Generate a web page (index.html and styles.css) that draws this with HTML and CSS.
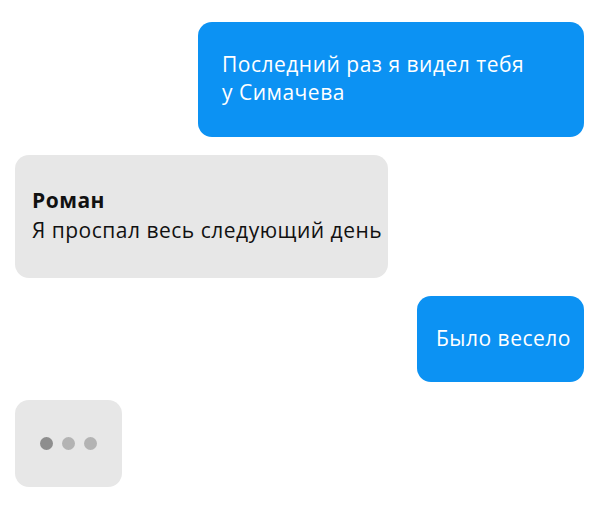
FILE: index.html
```html
<!DOCTYPE html>
<html lang="ru">
<head>
    <meta charset="UTF-8">
    <title>Чат</title>
    <link rel="stylesheet" href="styles.css">
</head>
<body>
    <!-- Chat thread -->
    <main class="chat">
        <div class="bubble bubble-out first">
            Последний раз я видел тебя<br>у Симачева
        </div>

        <div class="bubble bubble-in reply">
            <strong class="author">Роман</strong>
            <span>Я проспал весь следующий день</span>
        </div>

        <div class="bubble bubble-out short">Было весело</div>

        <!-- Typing indicator -->
        <div class="bubble bubble-in typing">
            <span class="dot dot-dark"></span>
            <span class="dot"></span>
            <span class="dot"></span>
        </div>
    </main>
</body>
</html>
```

FILE: styles.css
```css
body {
    margin: 0;
    padding: 0;
    background-color: #fff;
    font-family: 'Open Sans', 'Noto Sans', sans-serif;
    font-size: 21px;
    letter-spacing: 0.5px;
}

.chat {
    display: flex;
    flex-direction: column;
    gap: 18px;
    padding: 22px 20px 0 15px;
}

.bubble {
    box-sizing: border-box;
    border-radius: 14px;
}

.bubble-out {
    align-self: flex-end;
    background-color: #0c92f3;
    color: #fff;
}

.bubble-in {
    align-self: flex-start;
    background-color: #e7e7e7;
    color: #111;
}

.first {
    width: 386px;
    padding: 28px 0 31px 24px;
    line-height: 28px;
}

.reply {
    width: 373px;
    padding: 30px 0 33px 17px;
    line-height: 30px;
    display: flex;
    flex-direction: column;
}

.author {
    font-weight: 700;
}

.short {
    width: 167px;
    padding: 28px 0 30px 19px;
    line-height: 28px;
}

.typing {
    width: 107px;
    height: 87px;
    display: flex;
    align-items: center;
    gap: 9px;
    padding: 0 25px;
}

.dot {
    width: 13px;
    height: 13px;
    border-radius: 50%;
    background-color: #b3b3b3;
}

.dot-dark {
    background-color: #8e8e8e;
}
```
